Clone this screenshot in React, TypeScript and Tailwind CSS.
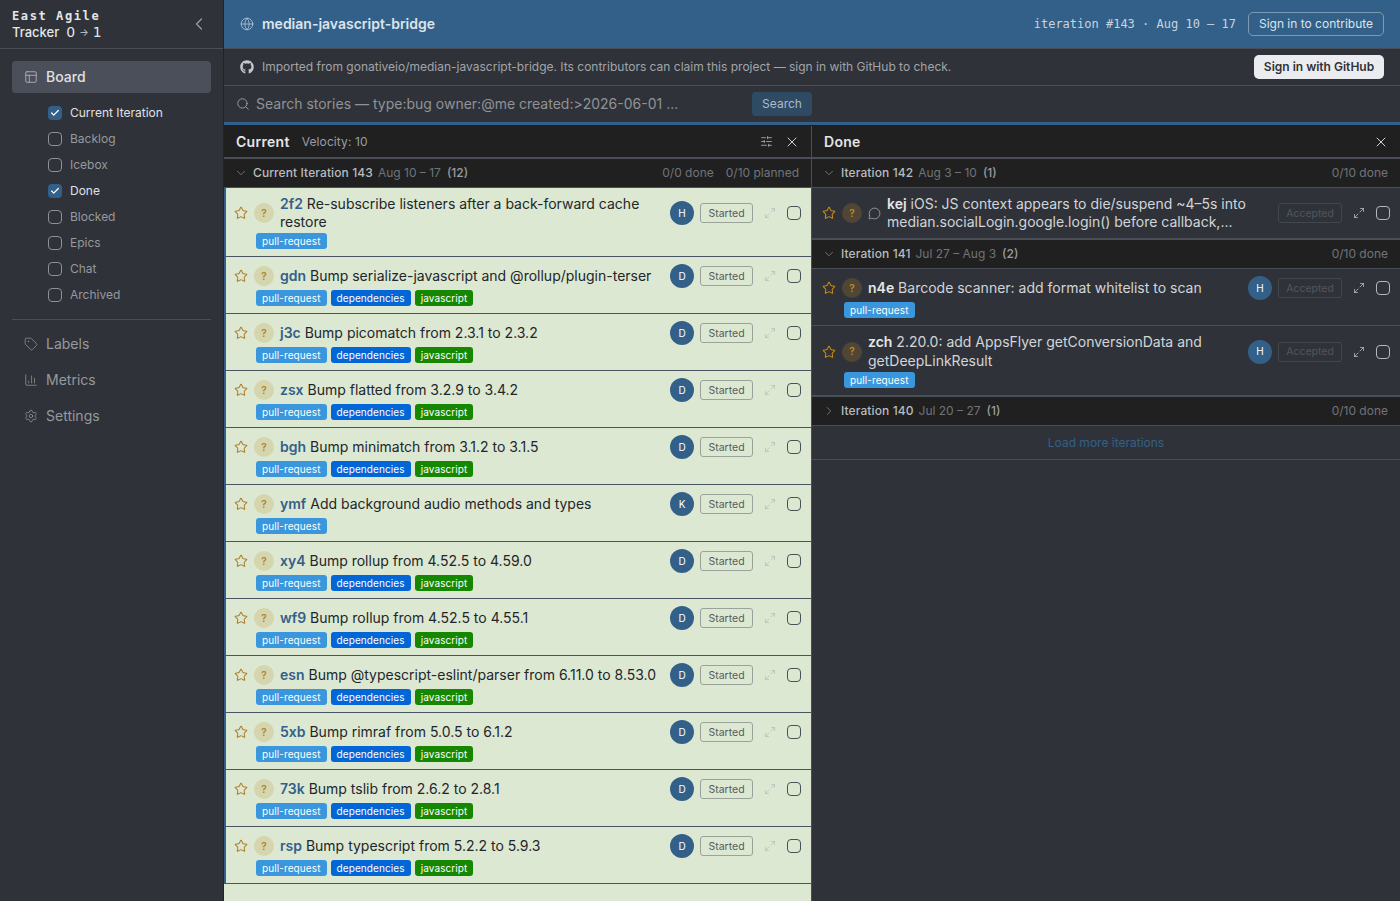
import { Fragment } from "react";
import {
  Check,
  ChevronDown,
  ChevronLeft,
  ChevronRight,
  Globe,
  PanelsTopLeft,
  Maximize2,
  MessageCircle,
  Search,
  Settings,
  SlidersHorizontal,
  Star,
  Tag,
  ChartColumn,
  X,
} from "lucide-react";
import { FaGithub } from "react-icons/fa";

const inter = "font-['Inter',sans-serif]";

const boardItems = [
  { label: "Current Iteration", checked: true },
  { label: "Backlog", checked: false },
  { label: "Icebox", checked: false },
  { label: "Done", checked: true },
  { label: "Blocked", checked: false },
  { label: "Epics", checked: false },
  { label: "Chat", checked: false },
  { label: "Archived", checked: false },
];

const deps = ["pull-request", "dependencies", "javascript"];
const pr = ["pull-request"];

const currentStories = [
  { id: "2f2", title: "Re-subscribe listeners after a back-forward cache restore", owner: "H", tags: pr, tall: true },
  { id: "gdn", title: "Bump serialize-javascript and @rollup/plugin-terser", owner: "D", tags: deps },
  { id: "j3c", title: "Bump picomatch from 2.3.1 to 2.3.2", owner: "D", tags: deps },
  { id: "zsx", title: "Bump flatted from 3.2.9 to 3.4.2", owner: "D", tags: deps },
  { id: "bgh", title: "Bump minimatch from 3.1.2 to 3.1.5", owner: "D", tags: deps },
  { id: "ymf", title: "Add background audio methods and types", owner: "K", tags: pr },
  { id: "xy4", title: "Bump rollup from 4.52.5 to 4.59.0", owner: "D", tags: deps },
  { id: "wf9", title: "Bump rollup from 4.52.5 to 4.55.1", owner: "D", tags: deps },
  { id: "esn", title: "Bump @typescript-eslint/parser from 6.11.0 to 8.53.0", owner: "D", tags: deps },
  { id: "5xb", title: "Bump rimraf from 5.0.5 to 6.1.2", owner: "D", tags: deps },
  { id: "73k", title: "Bump tslib from 2.6.2 to 2.8.1", owner: "D", tags: deps },
  { id: "rsp", title: "Bump typescript from 5.2.2 to 5.9.3", owner: "D", tags: deps },
];

const tagColor: Record<string, string> = {
  "pull-request": "bg-[#3a97dd]",
  dependencies: "bg-[#0366d6]",
  javascript: "bg-[#168700]",
};

const TagPill = ({ name }: { name: string }) => (
  <span className={`flex h-4 items-center rounded-[3px] px-1.5 pt-px text-[10px] tracking-[0.1px] text-white ${tagColor[name]}`}>{name}</span>
);

const Avatar = ({ letter }: { letter: string }) => (
  <span className="flex h-6 w-6 shrink-0 items-center justify-center rounded-full bg-[#336089] text-[10px] font-normal text-white">
    {letter}
  </span>
);

const CurrentCard = ({ story }: { story: (typeof currentStories)[number] }) => (
  <div className="border-b border-l-2 border-b-[#4a5563] border-l-[#336089] pb-[7px] pl-2 pr-2.5 pt-[7px]">
    <div className="flex items-center gap-1.5">
      <Star size={14} strokeWidth={1.75} className="shrink-0 text-[#ae7f2c]" />
      <span className="flex h-5 w-5 shrink-0 items-center justify-center rounded-full bg-[#d5d5ae] text-[10px] font-semibold text-[#b08030]">?</span>
      <div className={`min-w-0 flex-1 text-[14px] leading-[18px] text-[#22262a] ${story.tall ? "py-0" : "py-[3px]"}`}>
        <span className="font-semibold text-[#336089]">{story.id}</span> {story.title}
      </div>
      <Avatar letter={story.owner} />
      <span className="flex h-5 w-[53px] shrink-0 items-center justify-center rounded-[3px] border border-[#9aa39a] pt-px text-[10.5px] text-[#555c5c]">Started</span>
      <span className="flex w-[22px] shrink-0 justify-center text-[#aeb6b8]">
        <Maximize2 size={12} strokeWidth={1.25} />
      </span>
      <span className="h-3.5 w-3.5 shrink-0 rounded-[4px] border-[1.5px] border-[#4a5058]" />
    </div>
    <div className="ml-[22px] mt-0.5 flex gap-1">
      {story.tags.map((t) => (
        <TagPill key={t} name={t} />
      ))}
    </div>
  </div>
);

const DoneCard = ({
  id,
  title,
  owner,
  leading = "leading-[18px]",
  tall,
  chat,
  tags,
}: {
  id: string;
  title: string;
  owner?: string;
  leading?: string;
  tall?: boolean;
  chat?: boolean;
  tags?: boolean;
}) => (
  <div className="px-2.5 pb-[7px] pt-[7px]">
    <div className="flex items-center gap-1.5">
      <Star size={14} strokeWidth={1.75} className="shrink-0 text-[#c98a12]" />
      <span className="flex h-5 w-5 shrink-0 items-center justify-center rounded-full bg-[#4f4635] text-[10px] font-semibold text-[#c58a1c]">?</span>
      {chat && <MessageCircle size={13} strokeWidth={1.25} className="shrink-0 text-[#b9bcc0]" />}
      <div className={`min-w-0 flex-1 text-[14px] text-[#d3d5d8] ${leading} ${tall ? "" : "py-[3px]"}`}>
        <span className="font-semibold text-[#e6e6e6]">{id}</span> {title}
      </div>
      {owner && <Avatar letter={owner} />}
      <span className="flex h-5 w-16 shrink-0 items-center justify-center rounded-[3px] border border-[#42464d] pt-px text-[10.5px] text-[#52565c]">Accepted</span>
      <span className="flex w-[22px] shrink-0 justify-center text-[#d8dadc]">
        <Maximize2 size={12} strokeWidth={1.25} />
      </span>
      <span className="h-3.5 w-3.5 shrink-0 rounded-[4px] border-[1.5px] border-[#b4b7bb]" />
    </div>
    {tags && (
      <div className="ml-[22px] mt-0.5 flex gap-1">
        <TagPill name="pull-request" />
      </div>
    )}
  </div>
);

const SectionHeader = ({
  title,
  dates,
  count,
  right,
  collapsed,
}: {
  title: string;
  dates: string;
  count: string;
  right: string[];
  collapsed?: boolean;
}) => (
  <div className="flex h-7 items-center bg-[#202020] px-3 text-[12px]">
    {collapsed ? (
      <ChevronRight size={14} strokeWidth={1.25} className="-ml-0.5 mr-[5px] shrink-0 text-[#8b8f94]" />
    ) : (
      <ChevronDown size={14} strokeWidth={1.25} className="-ml-0.5 mr-[5px] shrink-0 text-[#8b8f94]" />
    )}
    <span className="font-medium tracking-[0.1px] text-[#b8bbbf]">{title}</span>
    <span className="ml-[5px] text-[#70747a]">{dates}</span>
    <span className="ml-1.5 font-medium text-[#9a9da2]">{count}</span>
    <span className="ml-auto flex gap-3 text-[#70747a]">
      {right.map((r) => (
        <span key={r}>{r}</span>
      ))}
    </span>
  </div>
);

const App = () => {
  return (
    <div className={`flex h-screen overflow-hidden bg-[#2f3238] ${inter}`}>
      {/* sidebar */}
      <aside className="flex w-[224px] shrink-0 flex-col border-r border-[#1f2226] bg-[#2f3238]">
        <div className="flex h-[49px] items-center justify-between border-b border-[#4a4e57] pl-3 pr-[14px]">
          <div className="text-[#e4e5e7]">
            <div className="font-['DejaVu_Sans_Mono',monospace] text-[12px] font-bold leading-4 tracking-[1.6px]">East Agile</div>
            <div className="flex items-center text-[13px] font-medium leading-4">
              Tracker
              <span className="ml-[7px] font-['DejaVu_Sans',sans-serif] text-[14px]">0</span>
              <span className="mx-1 text-[10px] text-[#b4b7bb]">→</span>
              <span className="font-['DejaVu_Sans',sans-serif] text-[14px]">1</span>
            </div>
          </div>
          <ChevronLeft size={20} strokeWidth={1.5} className="text-[#9a9da2]" />
        </div>
        <nav className="flex flex-col px-3 pt-3">
          <div className="flex h-8 items-center gap-2 rounded bg-[#4b4f59] px-3 pb-px text-[14px] font-medium text-[#e0e1e4]">
            <PanelsTopLeft size={14} strokeWidth={1.25} className="text-[#c4c6ca]" />
            Board
          </div>
          <div className="mt-[7px] flex flex-col">
            {boardItems.map((item) => (
              <div key={item.label} className="flex h-[26px] items-center gap-2 pl-9">
                {item.checked ? (
                  <span className="flex h-3.5 w-3.5 items-center justify-center rounded-[4px] bg-[#336089] text-white">
                    <Check size={10} strokeWidth={3} />
                  </span>
                ) : (
                  <span className="h-3.5 w-3.5 rounded-[4px] border-[1.5px] border-[#8d9095]" />
                )}
                <span className={`text-[12px] ${item.checked ? "text-[#e0e1e4]" : "text-[#96999e]"}`}>{item.label}</span>
              </div>
            ))}
          </div>
          <div className="mb-2 mt-[11px] h-px bg-[#4a4e57]" />
          <div className="flex flex-col gap-1 text-[14px] text-[#96999e]">
            {[
              { label: "Labels", Icon: Tag },
              { label: "Metrics", Icon: ChartColumn },
              { label: "Settings", Icon: Settings },
            ].map(({ label, Icon }) => (
              <div key={label} className="flex h-8 items-center gap-2 px-3">
                <Icon size={14} strokeWidth={1.25} />
                <span className="pb-0.5">{label}</span>
              </div>
            ))}
          </div>
        </nav>
      </aside>

      <main className="flex min-w-0 flex-1 flex-col">
        {/* project bar */}
        <header className="flex h-[49px] shrink-0 items-center border-b border-[#4a4e57] bg-[#336089] pl-4 pr-4">
          <Globe size={14} strokeWidth={1.25} className="text-[#c2d0dd]" />
          <span className="ml-2 pb-0.5 text-[14px] font-semibold text-[#dce4ec]">median-javascript-bridge</span>
          <span className="ml-auto font-['DejaVu_Sans_Mono',monospace] text-[12px] text-[#c8d4df]">iteration #143 · Aug 10 – 17</span>
          <span className="ml-3 flex h-6 w-[136px] items-center justify-center rounded-[5px] border border-[#7d9ab3] text-[12px] text-[#dce4ec]">Sign in to contribute</span>
        </header>

        {/* import banner */}
        <div className="flex h-[37px] shrink-0 items-center border-b border-[#4a4e57] pl-4 pr-4 text-[12px] text-[#a2a5aa]">
          <FaGithub size={14} className="text-[#c4c6ca]" />
          <span className="ml-2">Imported from gonativeio/median-javascript-bridge. Its contributors can claim this project — sign in with GitHub to check.</span>
          <span className="ml-auto flex h-6 w-[130px] items-center justify-center rounded-[5px] bg-[#ebecf0] font-semibold text-[#2f3238]">Sign in with GitHub</span>
        </div>

        {/* search */}
        <div className="flex h-[36px] shrink-0 items-center pl-3">
          <Search size={14} strokeWidth={1.5} className="text-[#a2a5aa]" />
          <span className="ml-1.5 w-[496px] pb-0.5 text-[14px] text-[#8f9297]">Search stories — type:bug owner:@me created:&gt;2026-06-01 ...</span>
          <span className="flex h-6 w-[60px] items-center justify-center rounded bg-[#2f4a63] text-[12px] text-[#a9bccc]">Search</span>
        </div>
        <div className="h-[3px] shrink-0 bg-[#336089]" />
        <div className="h-px shrink-0 bg-[#1f1f1f]" />

        <div className="flex min-h-0 flex-1">
          {/* current */}
          <section className="flex w-[588px] shrink-0 flex-col border-r border-[#4a4e57] bg-[#dde8d2]">
            <div className="flex h-[31px] shrink-0 items-center bg-[#202020] pl-3 pr-[11px]">
              <span className="text-[14px] font-semibold tracking-[0.3px] text-[#e4e5e7]">Current</span>
              <span className="ml-3 text-[12px] tracking-[0.1px] text-[#9a9da2]">Velocity: 10</span>
              <SlidersHorizontal size={13} strokeWidth={1.5} className="ml-auto text-[#b4b7bb]" />
              <X size={16} strokeWidth={1.5} className="ml-[11px] text-[#d0d2d5]" />
            </div>
            <div className="h-0.5 shrink-0 bg-[#4a4e57]" />
            <SectionHeader title="Current Iteration 143" dates="Aug 10 – 17" count="(12)" right={["0/0 done", "0/10 planned"]} />
            <div className="h-px shrink-0 bg-[#4a4e57]" />
            {currentStories.map((s) => (
              <CurrentCard key={s.id} story={s} />
            ))}
          </section>

          {/* done */}
          <section className="flex min-w-0 flex-1 flex-col bg-[#2f3339]">
            <div className="flex h-[31px] shrink-0 items-center bg-[#202020] pl-3 pr-[11px]">
              <span className="text-[14px] font-semibold tracking-[0.3px] text-[#e4e5e7]">Done</span>
              <X size={16} strokeWidth={1.5} className="ml-auto text-[#d0d2d5]" />
            </div>
            <div className="h-0.5 shrink-0 bg-[#4a4e57]" />
            {[
              {
                header: { title: "Iteration 142", dates: "Aug 3 – 10", count: "(1)" },
                cards: (
                  <DoneCard
                    id="kej"
                    title="iOS: JS context appears to die/suspend ~4–5s into median.socialLogin.google.login() before callback,..."
                    tall
                    chat
                  />
                ),
              },
              {
                header: { title: "Iteration 141", dates: "Jul 27 – Aug 3", count: "(2)" },
                cards: (
                  <>
                    <DoneCard id="n4e" title="Barcode scanner: add format whitelist to scan" owner="H" tags />
                    <div className="h-px bg-[#4a4e57]" />
                    <DoneCard id="zch" title="2.20.0: add AppsFlyer getConversionData and getDeepLinkResult" owner="H" leading="leading-[18.5px]" tall tags />
                  </>
                ),
              },
            ].map((block) => (
              <Fragment key={block.header.title}>
                <SectionHeader {...block.header} right={["0/10 done"]} />
                <div className="h-px shrink-0 bg-[#4a4e57]" />
                {block.cards}
                <div className="h-0.5 shrink-0 bg-[#4a4e57]" />
              </Fragment>
            ))}
            <SectionHeader title="Iteration 140" dates="Jul 20 – 27" count="(1)" right={["0/10 done"]} collapsed />
            <div className="h-px shrink-0 bg-[#4a4e57]" />
            <div className="flex h-[34px] shrink-0 items-center justify-center border-b border-[#4a4e57] pt-px text-[12px] text-[#336089]">
              Load more iterations
            </div>
          </section>
        </div>
      </main>
    </div>
  );
};

export default App;
